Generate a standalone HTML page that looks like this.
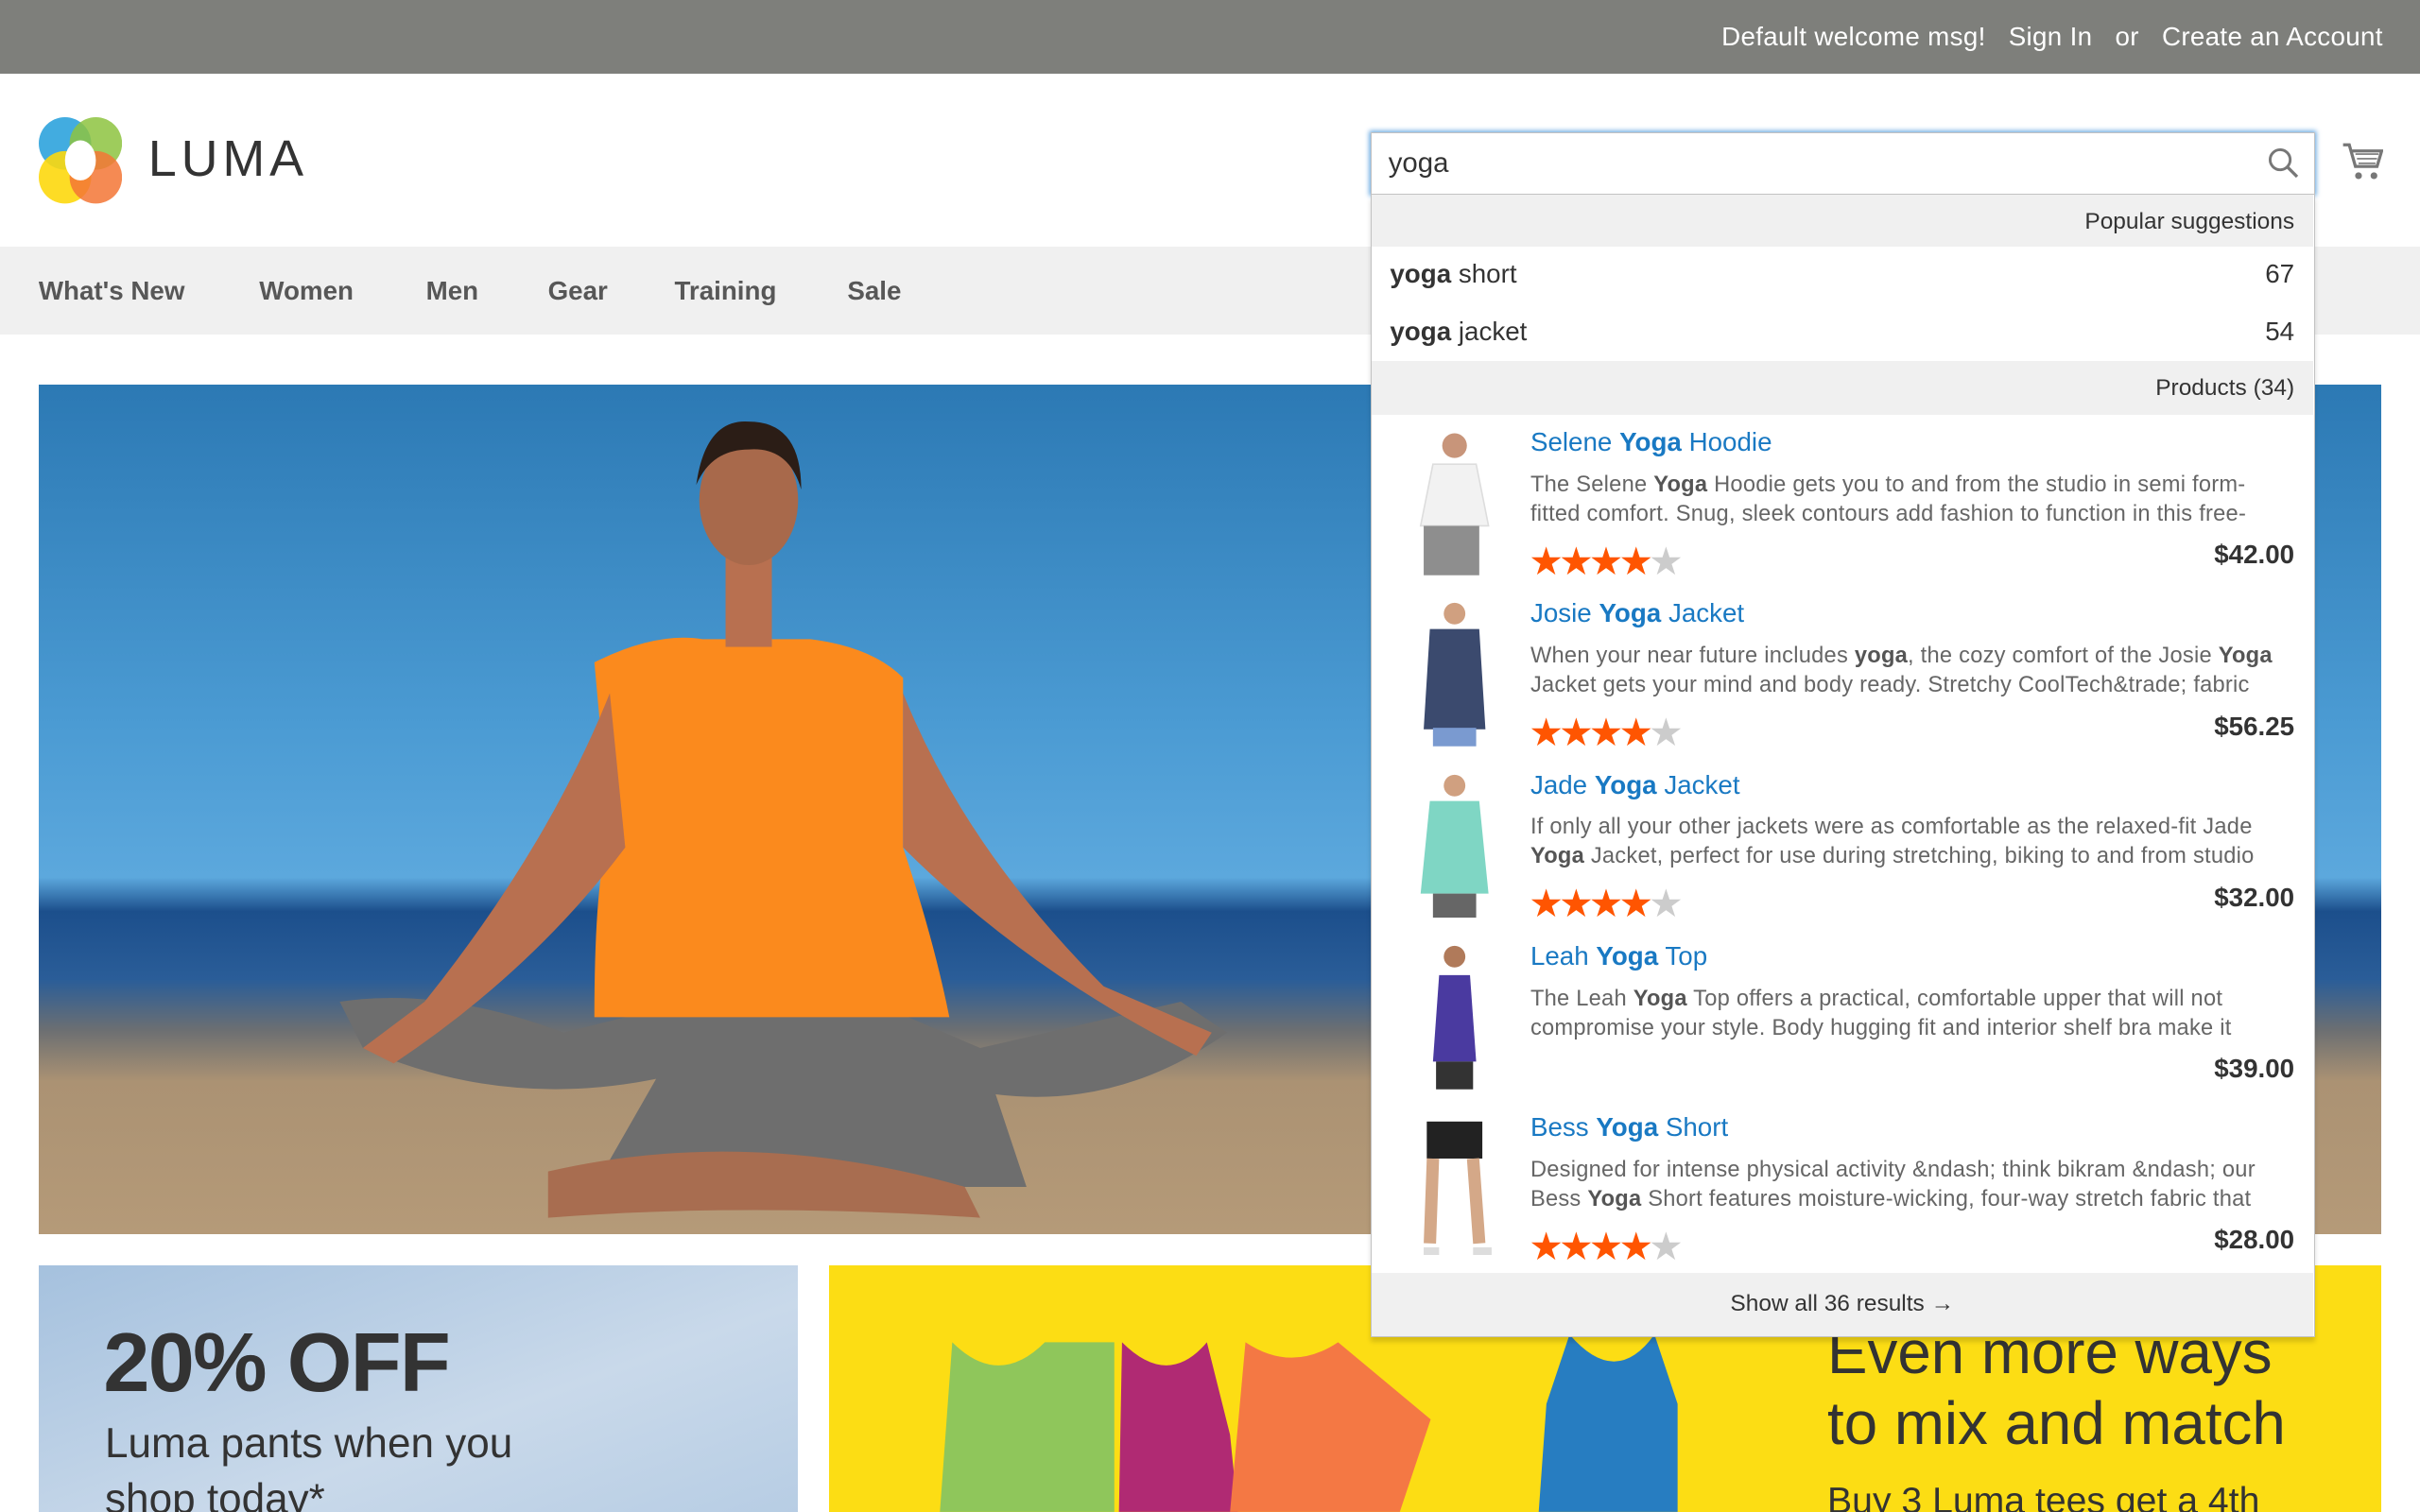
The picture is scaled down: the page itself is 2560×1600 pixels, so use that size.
<!DOCTYPE html>
<html><head><meta charset="utf-8">
<style>
*{margin:0;padding:0;box-sizing:border-box}
html,body{width:2560px;height:1600px;overflow:hidden;background:#fff}
#w{width:1568px;height:980px;position:relative;zoom:1.632653;font-family:"Liberation Sans",sans-serif;overflow:hidden}
.a{position:absolute}
.top{left:0;top:0;width:1568px;height:48px;background:#7e7f7b;color:#fff;font-size:17px}
.nav{left:0;top:160px;width:1568px;height:57px;background:#f0f0f0}
.nav span{position:absolute;top:19px;font-size:17px;font-weight:bold;color:#575757}
.dd{left:888px;top:126px;width:612px;height:741px;background:#fff;border:1px solid #c2c2c2;border-top:none;box-shadow:0 3px 3px rgba(0,0,0,.15)}
.hd{position:absolute;left:0;width:610px;background:#f0f0f0;text-align:right;padding-right:12px;font-size:15px;color:#333}
.sg{position:absolute;left:12px;width:586px;font-size:17px;color:#333}
.sg b{font-weight:bold}.sg i{font-style:normal;position:absolute;right:0}
.pr{position:absolute;left:0;width:610px;height:111px}
.pr .t{position:absolute;left:103px;top:8px;font-size:17px;color:#1979c3}
.pr .d{position:absolute;left:103px;top:36px;width:495px;font-size:14.5px;line-height:19px;color:#666;white-space:nowrap;overflow:hidden;letter-spacing:.15px}
.pr .d b{color:#555}
.pr .s{position:absolute;left:102px;top:80px;font-size:25px;letter-spacing:-3px;color:#ff5501}
.pr .s em{font-style:normal;color:#ccc}
.pr .p{position:absolute;right:12px;top:81px;font-size:17px;font-weight:bold;color:#333}
.pr .im{position:absolute;left:26px;top:8px;width:56px;height:96px}
</style></head><body><div id="w">
<div class="a top"><span class="a" style="right:24px;top:14px;white-space:nowrap;letter-spacing:.2px">Default welcome msg! &nbsp; Sign In &nbsp; or &nbsp; Create an Account</span></div>
<svg class="a" style="left:25px;top:76px" width="54" height="56" viewBox="0 0 54 56">
<ellipse cx="17" cy="17" rx="17" ry="17" fill="#2ea3dd" opacity=".9"/>
<ellipse cx="37" cy="17" rx="17" ry="17" fill="#8dc340" opacity=".85"/>
<ellipse cx="17" cy="39" rx="17" ry="17" fill="#fdd80d" opacity=".9"/>
<ellipse cx="37" cy="39" rx="17" ry="17" fill="#f37535" opacity=".85"/>
<ellipse cx="27" cy="28" rx="10" ry="13" fill="#fff"/></svg>
<div class="a" style="left:96px;top:84px;font-size:33px;letter-spacing:3px;color:#333">LUMA</div>
<div class="a nav"><span style="left:25px">What's New</span><span style="left:168px">Women</span><span style="left:276px">Men</span><span style="left:355px">Gear</span><span style="left:437px">Training</span><span style="left:549px">Sale</span></div>
<div class="a" style="left:888px;top:86px;width:612px;height:40px;border:1px solid #c2c2c2;box-shadow:0 0 3px 1px #68a8e0;background:#fff"><span class="a" style="left:11px;top:9px;font-size:18px;color:#333">yoga</span>
<svg class="a" style="right:10px;top:9px" width="20" height="20" viewBox="0 0 20 20"><circle cx="8" cy="8" r="6.5" fill="none" stroke="#777" stroke-width="1.8"/><path d="M13 13l6 6" stroke="#777" stroke-width="2"/></svg></div>
<svg class="a" style="left:1517px;top:92px" width="27" height="26" viewBox="0 0 27 26"><path d="M1 2h4l4 14h14l3-10H7" fill="none" stroke="#777" stroke-width="2"/><path d="M9 8h15M10 11h13M11 14h11" stroke="#777"/><circle cx="11" cy="22" r="2.2" fill="#777"/><circle cx="21" cy="22" r="2.2" fill="#777"/></svg>
<!-- hero -->
<div class="a" style="left:25px;top:249px;width:1518px;height:551px;overflow:hidden;background:linear-gradient(#2c79b4 0%,#4b9bd3 40%,#5ca8dd 58%,#1c4f8c 62%,#2a5d98 70%,#6c6f72 76%,#ab9273 82%,#b59a78 100%)">
<svg width="1518" height="551" viewBox="0 0 1518 551">
<path d="M400 450 Q300 470 210 430 L195 400 Q260 390 340 420 L420 400 Q480 360 540 400 L610 430 L740 400 L770 420 Q700 470 620 460 L640 520 L360 520 Z" fill="#6e6e6e"/>
<path d="M360 180 Q400 160 430 165 L500 165 Q540 170 560 190 L560 300 Q580 360 590 410 L360 410 Q360 320 370 290 Z" fill="#fb8a1d"/>
<path d="M370 200 Q330 300 250 400 L210 430 L230 440 Q320 380 380 300 Z" fill="#b87050"/>
<path d="M560 200 Q600 300 690 390 L760 420 L750 435 Q640 380 560 300 Z" fill="#b87050"/>
<rect x="445" y="100" width="30" height="70" fill="#b87050"/>
<ellipse cx="460" cy="75" rx="32" ry="42" fill="#a8694b"/>
<path d="M426 65 Q432 22 460 24 Q494 24 494 68 Q486 40 460 42 Q436 42 426 65Z" fill="#2b1d16"/>
<path d="M330 510 Q460 480 600 520 L610 540 Q460 530 330 540Z" fill="#a86d50"/>
</svg></div>
<!-- bottom blocks -->
<div class="a" style="left:25px;top:820px;width:492px;height:160px;background:linear-gradient(160deg,#a5c1de,#c9d9ea 60%,#b7cde4)">
<div class="a" style="left:42px;top:32px;font-size:54px;font-weight:bold;color:#333;letter-spacing:-1px">20% OFF</div>
<div class="a" style="left:43px;top:98px;font-size:27px;color:#333;line-height:36px">Luma pants when you<br>shop today*</div></div>
<div class="a" style="left:537px;top:820px;width:1006px;height:160px;background:#fcdd14;overflow:hidden">
<svg class="a" style="left:70px;top:40px" width="530" height="120" viewBox="0 0 530 120"><path d="M10 10 Q40 40 70 10 L115 10 L115 120 L2 120 Z" fill="#8fc65b"/><path d="M120 10 Q150 40 175 10 L190 70 L195 120 L118 120Z" fill="#b02a73"/><path d="M200 10 Q230 30 260 10 L320 60 L300 120 L190 120Z" fill="#f47844"/><path d="M410 5 Q440 40 465 5 L480 50 L480 120 L390 120 L395 50Z" fill="#277dc1"/></svg>
<div class="a" style="left:647px;top:34px;font-size:39px;color:#333;line-height:46px">Even more ways<br>to mix and match</div>
<div class="a" style="left:647px;top:140px;font-size:24px;color:#333">Buy 3 Luma tees get a 4th</div></div>
<!-- dropdown -->
<div class="a dd">
<div class="hd" style="top:0;height:34px;line-height:36px">Popular suggestions</div>
<div class="sg" style="top:42px"><b>yoga</b> short<i>67</i></div>
<div class="sg" style="top:79px"><b>yoga</b> jacket<i>54</i></div>
<div class="hd" style="top:108px;height:35px;line-height:35px">Products (34)</div>
<div class="pr" style="top:143px"><svg class="im" viewBox="0 0 56 96"><circle cx="28" cy="12" r="8" fill="#c8957a"/><path d="M14 24h28l8 40H6Z" fill="#f2f2f2" stroke="#ddd"/><rect x="8" y="64" width="36" height="32" fill="#8e8e8e"/></svg><div class="t">Selene <b>Yoga</b> Hoodie</div><div class="d">The Selene <b>Yoga</b> Hoodie gets you to and from the studio in semi form-<br>fitted comfort. Snug, sleek contours add fashion to function in this free-</div><div class="s">★★★★<em>★</em></div><div class="p">$42.00</div></div>
<div class="pr" style="top:254px"><svg class="im" viewBox="0 0 56 96"><circle cx="28" cy="10" r="7" fill="#d0a080"/><path d="M12 20h32l4 65H8Z" fill="#3b4a6e"/><rect x="14" y="84" width="28" height="12" fill="#7a9ad0"/></svg><div class="t">Josie <b>Yoga</b> Jacket</div><div class="d">When your near future includes <b>yoga</b>, the cozy comfort of the Josie <b>Yoga</b><br>Jacket gets your mind and body ready. Stretchy CoolTech&amp;trade; fabric</div><div class="s">★★★★<em>★</em></div><div class="p">$56.25</div></div>
<div class="pr" style="top:365px"><svg class="im" viewBox="0 0 56 96"><circle cx="28" cy="10" r="7" fill="#d0a080"/><path d="M12 20h32l6 60H6Z" fill="#7fd6c4"/><rect x="14" y="80" width="28" height="16" fill="#666"/></svg><div class="t">Jade <b>Yoga</b> Jacket</div><div class="d">If only all your other jackets were as comfortable as the relaxed-fit Jade<br><b>Yoga</b> Jacket, perfect for use during stretching, biking to and from studio</div><div class="s">★★★★<em>★</em></div><div class="p">$32.00</div></div>
<div class="pr" style="top:476px"><svg class="im" viewBox="0 0 56 96"><circle cx="28" cy="10" r="7" fill="#b07a5a"/><path d="M18 22h20l4 56H14Z" fill="#4a3aa0"/><rect x="16" y="78" width="24" height="18" fill="#333"/></svg><div class="t">Leah <b>Yoga</b> Top</div><div class="d">The Leah <b>Yoga</b> Top offers a practical, comfortable upper that will not<br>compromise your style. Body hugging fit and interior shelf bra make it</div><div class="p">$39.00</div></div>
<div class="pr" style="top:587px"><svg class="im" viewBox="0 0 56 96"><rect x="10" y="6" width="36" height="24" fill="#222"/><path d="M14 30l-2 55M40 30l4 55" stroke="#d4a888" stroke-width="8"/><path d="M8 90h10M40 90h12" stroke="#ddd" stroke-width="5"/></svg><div class="t">Bess <b>Yoga</b> Short</div><div class="d">Designed for intense physical activity &amp;ndash; think bikram &amp;ndash; our<br>Bess <b>Yoga</b> Short features moisture-wicking, four-way stretch fabric that</div><div class="s">★★★★<em>★</em></div><div class="p">$28.00</div></div>
<div class="a" style="left:0;top:699px;width:610px;height:41px;background:#f0f0f0;text-align:center;line-height:40px;font-size:15px;color:#333">Show all 36 results →</div>
</div>
</div></body></html>
